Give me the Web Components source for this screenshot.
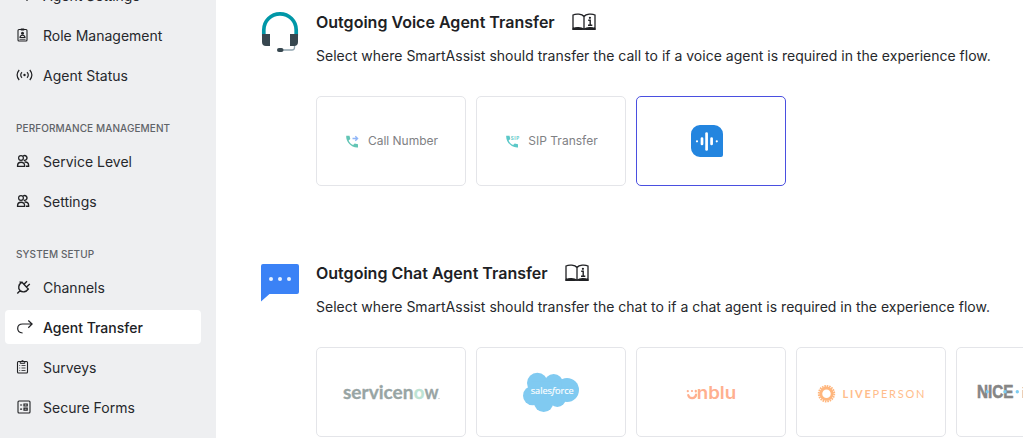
<!DOCTYPE html>
<html lang="en">
<head>
<meta charset="utf-8">
<title>Agent Transfer</title>
<style>
html,body{margin:0;height:100%;overflow:hidden;background:#fff}
body{font-family:Inter,"Liberation Sans",sans-serif;color:#202124}
</style>
</head>
<body>
<transfer-app></transfer-app>
<script>
const ICONS = {
  gear: '<circle cx="12.500" cy="9.500" r="2.500"/><path d="M12.500 12v2M9 10.500h-1.500"/>',
  badge: '<rect x="3.500" y="2.500" width="9" height="11.500" rx="1" stroke-width="1.100"/><path d="M6.300 1.500h3.400v2H6.300z" fill="currentColor" stroke="none"/><circle cx="8" cy="6.300" r="1.500" fill="currentColor" stroke="none"/><path d="M5.500 10.500c.2-3 4.800-3 5 0z" stroke-width="1.100"/><path d="M5 12.300h6" stroke-width=".8"/>',
  signal: '<circle cx="10" cy="8" r="1.200" fill="currentColor" stroke="none"/><path d="M7.500 5.200c-1.700 1.500-1.700 4.100 0 5.600M12.500 5.200c1.700 1.500 1.700 4.100 0 5.600M4.700 3c-2.500 3-2.500 7 0 10M15.300 3c2.500 3 2.500 7 0 10"/>',
  people: '<circle cx="6.500" cy="5" r="2.400"/><path d="M8.700 3a2.400 2.400 0 1 1 .6 4.200M3.100 13.400v-1c0-4.300 7-4.300 7 0v1zM10 9.200c2.300-.6 4.100.8 4.100 3.100v1h-2.600" stroke-width="1.400"/>',
  plug: '<path d="M7.500 3.200l6.300 6.800c-2.300 3.200-5.800 3.700-8.200 1.600C3.100 9.300 4 5.400 7.500 3.200zM9.500 5.300l3-3.100M12 8l3.300-3M5.500 11.700l-2.700 2.700M5 2.900l2.700.7" stroke-width="1.400"/>',
  turn: '<path d="M7.500 14C.7 13.500 1.200 5 7.500 5H17M13.200 1.500L17 5l-3.800 3.700" transform="translate(.6)"/>',
  clipboard: '<rect x="3" y="2.500" width="10" height="11.500" rx="1" stroke-width="1.100"/><path d="M5.700 4.300V2.700h1.100c0-1.600 2.400-1.600 2.400 0h1.100v1.600z" stroke-width="1"/><path d="M4.800 6.500h.9M7 6.500h4M4.800 9h.9M7 9h4M4.800 11.500h.9M7 11.500h4" stroke-width=".8"/>',
  form: '<rect x="3.500" y="2" width="12" height="12" rx="1" stroke-width="1.100"/><path d="M5.600 6h2M5.600 10.200h2"/><path d="M9.500 5h3.200v2H9.500zM9.500 9.200h3.200v2H9.500z" stroke-width="1.200"/>'
};

const LOGOS = {
  voice: `<path d="M63 28h17a9 9 0 0 1 9 9v21a2 2 0 0 1-2 2H66a9 9 0 0 1-9-9V37a9 9 0 0 1 9-9z" transform="translate(-3)" fill="#2385df"/>
    <g stroke="#fff" stroke-linecap="round" fill="none"><path d="M69.600 36.500v16" stroke-width="2.700"/><path d="M65 41.500v5.500M74.600 41.500v5.500" stroke-width="2.700"/><path d="M60 44.300v.01M79.800 44.300v.01" stroke-width="2.200"/></g>`,
  servicenow: `<g font-family="Lato,sans-serif" font-weight="700" font-size="19" fill="#98a5a4" stroke-width=".3"><text x="26" y="51" textLength="70.500" lengthAdjust="spacingAndGlyphs" stroke="#98a5a4">servicen</text><text x="107.500" y="51" textLength="14" lengthAdjust="spacingAndGlyphs" stroke="#98a5a4">w</text><text x="96.800" y="51" textLength="10.700" lengthAdjust="spacingAndGlyphs" fill="#bde3d3" stroke="#bde3d3">o</text></g><circle cx="122" cy="50.500" r=".5" fill="#98a5a4"/>`,
  salesforce: `<g transform="translate(183 12) scale(.33333)"><g fill="#80caf1" transform="translate(-480 0)"><circle cx="112" cy="69" r="31"/><circle cx="161" cy="70" r="28"/><circle cx="201" cy="90" r="36"/><circle cx="172" cy="116" r="25"/><circle cx="131" cy="127" r="29"/><circle cx="98" cy="107" r="29"/><path d="M95 65h90v65H95z"/></g></g>
    <text x="53.700" y="46" textLength="43" lengthAdjust="spacingAndGlyphs" font-family="'Open Sans',sans-serif" font-size="9.700" fill="#fff" stroke="#fff" stroke-width=".15">sales<tspan font-style="italic">f</tspan>orce</text>`,
  unblu: `<text x="59.700" y="51" textLength="39.500" lengthAdjust="spacingAndGlyphs" font-family="Inter,sans-serif" font-weight="600" font-size="17.500" fill="#ffb08f">nblu</text><g fill="none" stroke="#ffb08f" stroke-width="2.200" stroke-linecap="round"><path d="M51.200 47c1 4.200 7.300 4.200 7.900-.5M50.800 43v.2M58.800 42.800v.6M55 43v.01"/></g>`,
  liveperson: `<circle cx="29.500" cy="45.700" r="5.700" fill="none" stroke="#ffb67d" stroke-width="2.900"/><circle cx="29.500" cy="45.700" r="7.700" fill="none" stroke="#ffb67d" stroke-width="2" stroke-dasharray="1.560 .859"/>
    <text x="45.500" y="50" textLength="82" font-family="Lato,sans-serif" font-size="11" fill="#ffbd8b"><tspan font-weight="700">LIVE</tspan>PERSON</text>`,
  nice: `<text x="20" y="50.300" textLength="36.500" lengthAdjust="spacingAndGlyphs" font-family="'Liberation Sans',sans-serif" font-weight="700" font-size="19" fill="#858585" stroke="#858585" stroke-width=".6">NICE</text><g fill="#7dcdf2"><circle cx="30.300" cy="43.700" r="1.700"/><circle cx="48" cy="43.700" r="1.700"/><circle cx="60.300" cy="43.700" r="1.700"/></g><text x="64.500" y="50" font-family="'Liberation Sans',sans-serif" font-size="15" fill="#aaa">i</text>`
};

const PHONE = '<path d="M.2.800h3.300l.8 3.300-1.700 1.500c1 2.200 2.300 3.500 4.500 4.500l1.600-1.700 3.300.8v3.200C5.500 13-.3 7 .2.800z"/>';
const CALLS = {
  call: `<g fill="#63c5b5">${PHONE}</g><path d="M6.500 3.500h4.800M9.300 1.300l2.300 2.200-2.300 2.200" fill="none" stroke="#8fb5f8" stroke-width="1.300"/>`,
  sip: `<g fill="#5bc8c8">${PHONE}</g><text x="4.700" y="4.500" textLength="8.500" font-family="Inter,sans-serif" font-weight="700" font-size="4.500" fill="#5bc8c8">SIP</text>`
};

const HEROES = {
  headset: `<path d="M3.800 25V19a16.200 16.200 0 0 1 32.400 0v6" fill="none" stroke="#0097a7" stroke-width="3.700"/><path d="M34.500 33v3.500q0 2.500-2.500 2.500H22" fill="none" stroke="#90a4ae" stroke-width="1.300"/><path d="M10 23v12H6a4 4 0 0 1-4-4v-8zM30 23h8v8a4 4 0 0 1-4 4h-4z" fill="#37474f"/><rect x="17" y="37" width="6.500" height="4" rx="2" fill="#37474f"/>`,
  chat: '<path d="M3 2h34a2 2 0 0 1 2 2v26a2 2 0 0 1-2 2H9.500L1 39.500V4a2 2 0 0 1 2-2z" fill="#3b82f6"/><g fill="#e9f2ff"><circle cx="11" cy="17" r="2"/><circle cx="20" cy="17" r="2"/><circle cx="29" cy="17" r="2"/></g>'
};

class BaseElement extends HTMLElement {
  connectedCallback() {
    if (this.shadowRoot) return;
    const t = document.createElement('template');
    t.innerHTML = this.view();
    this.attachShadow({ mode: 'open' }).append(t.content.cloneNode(true));
  }
  attr(n) { return this.getAttribute(n) || ''; }
}

customElements.define('nav-item', class extends BaseElement {
  view() {
    return `<style>
    :host{display:flex;align-items:center;box-sizing:border-box;height:34px;margin:0 15px 6px 5px;padding-left:10px;border-radius:4px;font-size:14px;line-height:20px;color:#26282c}
    :host([active]){background:#fff;color:#202124;font-weight:500}
    svg{flex:none;width:18px;height:16px;margin-right:10px;color:#202124}
    span{padding-top:2px}
    </style><svg viewBox="0.500 0 18 16" fill="none" stroke="currentColor" stroke-width="1.200">${ICONS[this.attr('icon')]}</svg><span><slot></slot></span>`;
  }
});

customElements.define('nav-heading', class extends BaseElement {
  view() {
    return `<style>:host{display:block;box-sizing:border-box;height:46px;padding:22px 0 0 16px;font-size:10px;line-height:16px;font-weight:500;letter-spacing:.1px;color:#5f6368;white-space:nowrap}</style><slot></slot>`;
  }
});

customElements.define('side-nav', class extends BaseElement {
  view() {
    return `<style>:host{display:flex;flex-direction:column;flex:none;width:216px;height:438px;overflow:hidden;background:#eeeff1}
    div{margin-top:-22px}</style><div>
    <nav-item icon="gear">Agent Settings</nav-item>
    <nav-item icon="badge">Role Management</nav-item>
    <nav-item icon="signal">Agent Status</nav-item>
    <nav-heading>PERFORMANCE MANAGEMENT</nav-heading>
    <nav-item icon="people">Service Level</nav-item>
    <nav-item icon="people">Settings</nav-item>
    <nav-heading>SYSTEM SETUP</nav-heading>
    <nav-item icon="plug">Channels</nav-item>
    <nav-item icon="turn" active>Agent Transfer</nav-item>
    <nav-item icon="clipboard">Surveys</nav-item>
    <nav-item icon="form">Secure Forms</nav-item></div>`;
  }
});

customElements.define('option-card', class extends BaseElement {
  view() {
    const logo = this.attr('logo'), call = this.attr('call');
    return `<style>
    :host{display:flex;flex:none;align-items:center;justify-content:center;box-sizing:border-box;width:150px;height:90px;border:1px solid #e4e5e9;border-radius:5px;background:#fff;font-size:12px;line-height:18px;color:#808184}
    :host([selected]){border-color:#4a4fe0}
    .logo{width:148px;height:88px;flex:none}
    .call{width:14px;height:14px;margin:2px 8px 0 2px;overflow:visible}
    </style>${logo ? `<svg class="logo" viewBox="0 0 148 88">${LOGOS[logo]}</svg>` : `<svg class="call" viewBox="0 0 14 14">${CALLS[call]}</svg>`}<slot></slot>`;
  }
});

customElements.define('guide-icon', class extends BaseElement {
  view() {
    return `<style>:host{display:block;width:24px;height:18px}svg{display:block}</style>
    <svg width="24" height="18" viewBox="0 0 24 18" fill="none" stroke="#202124" stroke-width="1.300"><path d="M12 16V3.500C10 .9 4 .5 1 2v14zM12 16V3.500C14 .9 20 .5 23 2v14zM1 15.700c3-1.500 8-1.500 11 .5 3-2 8-2 11-.5"/><path d="M.5 17h23v-1.700c-3-.8-7-.8-9.500.9h-4c-2.500-1.700-6.500-1.700-9.500-.9z" fill="#202124" stroke="none"/><path d="M16.200 7.200h2v5M16 12.300h4.300" stroke-width="1.400"/><circle cx="17.900" cy="4.800" r="1.100" fill="#202124" stroke="none"/></svg>`;
  }
});

customElements.define('transfer-section', class extends BaseElement {
  view() {
    return `<style>
    :host{display:flex;height:251px;padding-left:44px}
    .hero{flex:none;width:40px;height:44px;margin:11px 16px 0 0}
    .head{display:flex;align-items:center;gap:17.500px;height:24px;padding-top:10px}
    h2{margin:0;font-size:16px;line-height:24px;font-weight:600;color:#202124;white-space:nowrap;letter-spacing:.01px}
    p{margin:12px 0 0;font-size:14px;line-height:20px;color:#26282c;white-space:nowrap;letter-spacing:.01px}
    .cards{display:flex;gap:10px;margin-top:30px}
    </style><svg class="hero" viewBox="0 0 40 44">${HEROES[this.attr('hero')]}</svg>
    <div><div class="head"><h2>${this.attr('heading')}</h2><guide-icon></guide-icon></div><p>${this.attr('description')}</p><div class="cards"><slot></slot></div></div>`;
  }
});

customElements.define('transfer-app', class extends BaseElement {
  view() {
    return `<style>:host{display:flex;width:100%;height:438px;overflow:hidden}main{flex:1;min-width:0;overflow:hidden}</style>
    <side-nav></side-nav><main>
    <transfer-section hero="headset" heading="Outgoing Voice Agent Transfer" description="Select where SmartAssist should transfer the call to if a voice agent is required in the experience flow.">
      <option-card call="call">Call Number</option-card><option-card call="sip">SIP Transfer</option-card><option-card logo="voice" selected></option-card>
    </transfer-section>
    <transfer-section hero="chat" heading="Outgoing Chat Agent Transfer" description="Select where SmartAssist should transfer the chat to if a chat agent is required in the experience flow.">
      <option-card logo="servicenow"></option-card><option-card logo="salesforce"></option-card><option-card logo="unblu"></option-card><option-card logo="liveperson"></option-card><option-card logo="nice"></option-card>
    </transfer-section></main>`;
  }
});
</script>
</body>
</html>
